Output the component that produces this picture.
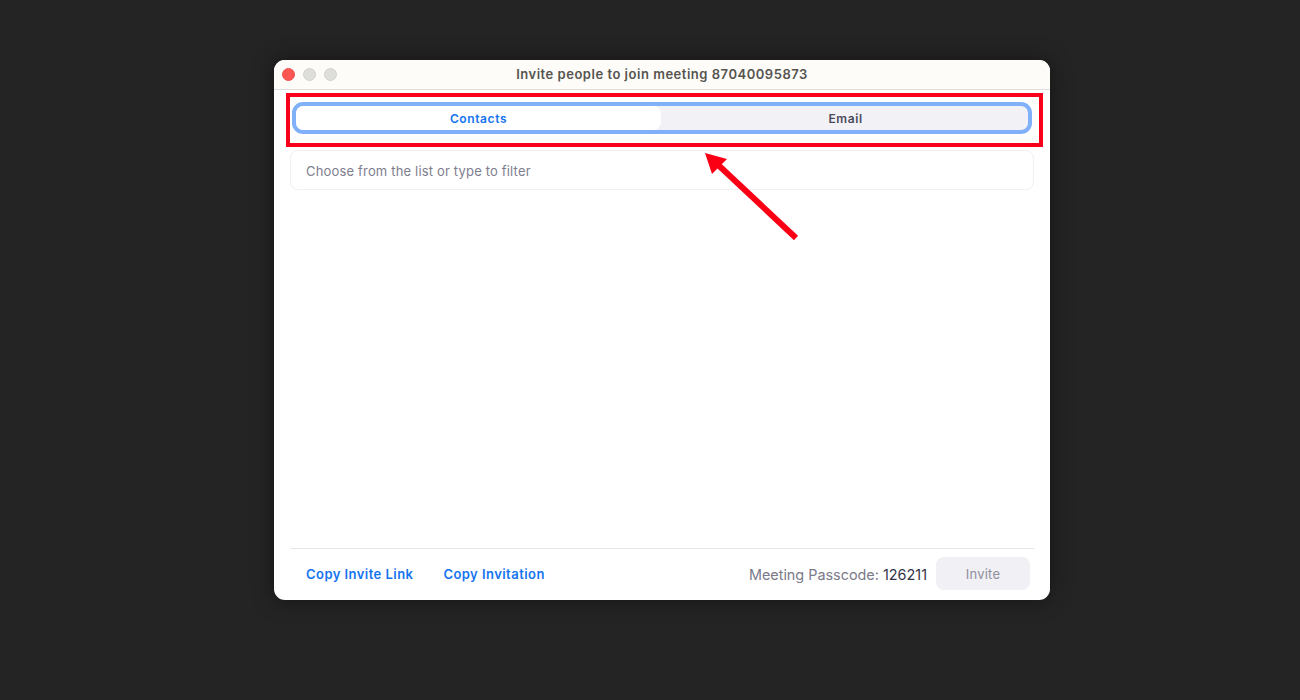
<script lang="ts">
    let tab = "contacts";
</script>

<div class="desktop">
    <div class="window">
        <header class="titlebar">
            <div class="lights">
                <span class="light red"></span>
                <span class="light"></span>
                <span class="light"></span>
            </div>
            <h1>Invite people to join meeting 87040095873</h1>
        </header>

        <div class="content">
            <div class="segments">
                <button class="segment" class:active={tab === "contacts"} on:click={() => (tab = "contacts")}>Contacts</button>
                <button class="segment" class:active={tab === "email"} on:click={() => (tab = "email")}>Email</button>
            </div>

            <input class="filter" placeholder="Choose from the list or type to filter" />

            <div class="list"></div>

            <footer>
                <a href="#link">Copy Invite Link</a>
                <a href="#invitation">Copy Invitation</a>
                <span class="passcode">Meeting Passcode: <b>126211</b></span>
                <button class="invite" disabled>Invite</button>
            </footer>
        </div>

        <div class="highlight"></div>
        <svg class="arrow" width="100" height="96" viewBox="0 0 100 96">
            <path d="M93 88 L12 12" stroke="#fb0014" stroke-width="6" fill="none" />
            <path d="M2 3 L24 9 L9 24 Z" fill="#fb0014" />
        </svg>
    </div>
</div>

<style>
    :global(body) {
        background: #242424;
    }

    .desktop {
        height: 700px;
        padding: 60px 0 0 274px;
        box-sizing: border-box;
        background: #242424;
        font-family: Inter, "Noto Sans", sans-serif;
    }

    .window {
        position: relative;
        width: 776px;
        height: 540px;
        border-radius: 11px;
        background: #fff;
        display: flex;
        flex-direction: column;
        box-shadow: 0 0 22px rgba(0, 0, 0, 0.45);
    }

    .titlebar {
        height: 29px;
        flex-shrink: 0;
        display: flex;
        align-items: center;
        position: relative;
        background: #fdfcf8;
        border-bottom: 1px solid #dedede;
        border-radius: 11px 11px 0 0;
    }

    .lights {
        display: flex;
        gap: 8px;
        padding-left: 8px;
        margin-top: -1px;
    }

    .light {
        width: 13px;
        height: 13px;
        border-radius: 50%;
        background: #dededa;
        border: 1px solid #d2d2ce;
        box-sizing: border-box;
    }

    .light.red {
        background: #fc5753;
        border-color: #f0504c;
    }

    h1 {
        position: absolute;
        left: 0;
        right: 0;
        margin: -1px 0 0;
        text-align: center;
        font-size: 13px;
        font-weight: 600;
        letter-spacing: 0.52px;
        color: #56544f;
    }

    .content {
        flex: 1;
        display: flex;
        flex-direction: column;
        padding: 12px 16px 0;
    }

    .segments {
        display: flex;
        height: 32px;
        margin: 0 2px;
        box-sizing: border-box;
        border: 4px solid #7fb0f9;
        border-radius: 11px;
        background: #f1f1f6;
    }

    .segment {
        flex: 1;
        border: 0;
        background: none;
        padding: 1px 0 0;
        font: 600 12px Inter, "Noto Sans", sans-serif;
        letter-spacing: 0.6px;
        color: #4b4b5c;
    }

    .segment + .segment {
        padding-left: 2px;
    }

    .segment.active {
        background: #fff;
        border-radius: 8px;
        color: #1474f0;
    }

    .filter {
        margin-top: 16px;
        height: 40px;
        box-sizing: border-box;
        padding: 1px 15px 0;
        border: 1px solid #f0f0f4;
        border-radius: 8px;
        font: 13px Inter, "Noto Sans", sans-serif;
        letter-spacing: 0.17px;
        outline: none;
    }

    .filter::placeholder {
        color: #7e7e8e;
        opacity: 1;
    }

    .list {
        flex: 1;
    }

    footer {
        height: 52px;
        display: flex;
        align-items: center;
        box-sizing: border-box;
        border-top: 1px solid #e6e6e8;
        padding: 0 4px 1px 16px;
        font-size: 13px;
    }

    footer a {
        margin-right: 30px;
        font-weight: 600;
        letter-spacing: 0.45px;
        color: #1474f0;
        text-decoration: none;
    }

    .passcode {
        margin-left: auto;
        font-size: 14.4px;
        color: #7a7a8a;
    }

    .passcode b {
        font-weight: 400;
        color: #33334a;
    }

    .invite {
        width: 94px;
        height: 33px;
        margin: 0 0 1px 9px;
        border: 0;
        border-radius: 8px;
        background: #f0f0f5;
        font: 13px Inter, "Noto Sans", sans-serif;
        letter-spacing: 0.2px;
        color: #8f8f9c;
    }

    .highlight {
        position: absolute;
        left: 12px;
        top: 33px;
        width: 757px;
        height: 54px;
        box-sizing: border-box;
        border: 4px solid #f8001c;
    }

    .arrow {
        position: absolute;
        left: 429px;
        top: 90px;
    }
</style>
